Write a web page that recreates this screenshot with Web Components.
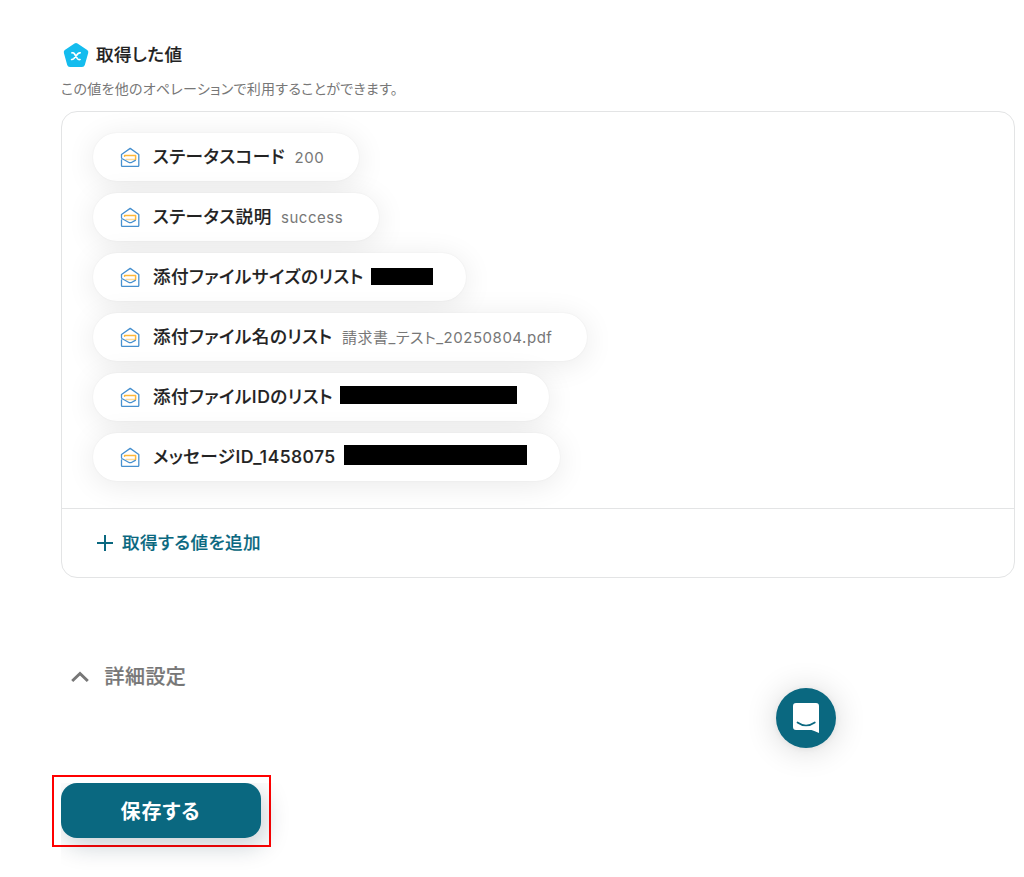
<!DOCTYPE html>
<html lang="ja">
<head>
<meta charset="utf-8">
<title>取得した値</title>
<style>
html,body{margin:0;background:#fff;overflow:hidden}
body{font-family:Inter,"Noto Sans CJK JP",sans-serif;color:#222}
</style>
</head>
<body>
<operation-page></operation-page>
<script>
const define = (name, html) => customElements.define(name, class extends HTMLElement {
  constructor() {
    super();
    const t = document.createElement('template');
    t.innerHTML = html;
    this.attachShadow({mode: 'open'}).append(t.content.cloneNode(true));
  }
});

define('mail-icon', `<style>:host{display:block;width:20px;height:20px}svg{display:block}</style>
<svg width="20" height="20" viewBox="0 0 20 20" fill="none" stroke-width="1.3" stroke-linejoin="round" stroke-linecap="round">
<path stroke="#fdb83a" stroke-width="1.500" d="M4.600 9.300V8.500H15.600V12.500"/><path stroke="#fdb83a" stroke-opacity=".55" d="M15 12.500H6"/>
<path stroke="#4690cf" d="M1.500 13V18.500Q1.500 19.400 2.300 19.400H18Q18.800 19.400 18.800 18.500V7.500L10.200 1.400 1.500 7.500V10.500Q1.500 11.300 2.300 11.800L8.500 15.200Q10.200 16.100 11.900 15.200L15.300 13.400"/></svg>`);

define('value-pill', `<style>
:host{display:flex;align-items:center;box-sizing:border-box;height:48px;width:var(--w);padding-left:27px;border-radius:24px;background:#fff;box-shadow:0 0 2px rgba(0,0,0,.06),0 4px 30px rgba(0,0,0,.09)}
mail-icon{margin:0 13px 0 0;flex:none}
.label{font-weight:500;-webkit-text-stroke:.15px currentColor;font-size:17.6px;line-height:24px;white-space:nowrap;letter-spacing:.46px;font-feature-settings:"palt";width:var(--lw);flex:none}
.value{font-size:15px;line-height:20px;white-space:nowrap;letter-spacing:.53px;color:#777;font-feature-settings:"palt";margin-top:2px}
</style><mail-icon></mail-icon><span class="label"><slot></slot></span><span class="value"><slot name="value"></slot></span>`);

define('redacted-value', `<style>:host{display:block;width:var(--rw);height:var(--rh);background:#000;margin-top:var(--mt,0)}</style>`);

define('section-heading', `<style>
:host{display:block}
.row{display:flex;align-items:center;height:28px;gap:6px;padding-left:2px}
svg{display:block}
h2{margin:0;font-size:17.6px;line-height:28px;font-weight:500;-webkit-text-stroke:.15px currentColor;letter-spacing:.4px;font-feature-settings:"palt"}
p{margin:10px 0 0;height:18px;font-size:14px;line-height:20px;color:#777;letter-spacing:.29px;font-feature-settings:"palt";white-space:nowrap}
</style><div class="row"><svg width="27" height="27" viewBox="0 0 27 27"><path fill="#14bcee" d="M11.500 1.600Q13 .600 14.500 1.600L24.200 8Q25.700 9.100 25.200 10.900L21.800 22.900Q21.200 25 19 25H7Q4.800 25 4.200 22.900L.900 10.900Q.400 9.100 1.800 8Z"/><path fill="none" stroke="#fff" stroke-width="1.700" stroke-linecap="round" d="M9 10.800Q10.600 10.500 11.400 11.800L14.400 16.600Q15.200 17.800 17 17.500M17.200 10.800Q16 10.700 15 11.700L10.900 16.500Q10 17.500 8.600 17.500"/></svg><h2><slot></slot></h2></div><p><slot name="note"></slot></p>`);

define('value-panel', `<style>
:host{display:block;box-sizing:border-box;width:954px;height:467px;border:1px solid #e3e4e5;border-radius:16px;overflow:hidden}
.list{box-sizing:border-box;height:397px;padding:21px 31px;display:flex;flex-direction:column;align-items:flex-start;gap:12px;border-bottom:1px solid #e3e4e5;overflow:hidden}
.foot{height:68px;display:flex;align-items:center}
</style><div class="list"><slot></slot></div><div class="foot"><slot name="footer"></slot></div>`);

define('add-button', `<style>:host{display:flex;align-items:center;color:#0a6880;padding-left:35px;gap:9px;font-size:17.6px;font-weight:500;-webkit-text-stroke:.15px currentColor;line-height:24px;letter-spacing:.4px;font-feature-settings:"palt"}svg{display:block}</style>
<svg width="16" height="16" viewBox="0 0 16 16" stroke="currentColor" stroke-width="2"><path d="M8 0V16M0 8H16"/></svg><span><slot></slot></span>`);

define('detail-toggle', `<style>:host{display:flex;align-items:center;gap:16px;color:#777;font-size:20px;font-weight:500;-webkit-text-stroke:.2px currentColor;line-height:30px;letter-spacing:.4px}svg{display:block}</style>
<svg width="18" height="12" viewBox="0 0 18 12" fill="none" stroke="currentColor" stroke-width="3"><path d="M1.200 10 9 2.500 16.800 10"/></svg><span><slot></slot></span>`);

define('save-button', `<style>
:host{display:block;box-sizing:border-box;width:219px;height:72px;border:2px solid #f00;padding:6px 7px}
.clip{width:200px;height:55px;clip-path:inset(0 -40px -40px 0)}
button{all:unset;box-sizing:border-box;width:200px;height:55px;border-radius:16px;background:#0a6880;color:#fff;display:flex;align-items:center;justify-content:center;font-size:20px;font-weight:700;letter-spacing:.9px;padding:0 1px 1px 0;font-feature-settings:"palt";box-shadow:4px 8px 24px rgba(9,40,60,.22)}
</style><div class="clip"><button><slot></slot></button></div>`);

define('chat-launcher', `<style>:host{position:absolute;left:776px;top:688px;width:60px;height:60px;border-radius:50%;background:#0a6880;box-shadow:0 1px 6px rgba(0,0,0,.06),0 2px 32px rgba(0,0,0,.16);display:grid;place-items:center}svg{display:block}</style>
<svg width="28" height="32" viewBox="0 0 28 32"><path fill="#fff" d="M4 1H24Q27 1 27 4V31Q22.500 29 19.500 28H4Q1 28 1 25V4Q1 1 4 1Z"/><path d="M5.500 20.500Q14 26.500 22.800 20.500" fill="none" stroke="#0a6880" stroke-width="1.700" stroke-linecap="round"/></svg>`);

define('operation-page', `<style>
:host{display:flex;flex-direction:column;align-items:flex-start;box-sizing:border-box;width:1024px;height:877px;padding:41px 0 0 61px;overflow:hidden;position:relative;color:#222}
value-panel{margin-top:14px}
detail-toggle{margin:84px 0 0 9.6px}
save-button{margin:83px 0 0 -9px}
</style>
<section-heading>取得した値<span slot="note">この値を他のオペレーションで利用することができます。</span></section-heading>
<value-panel>
<value-pill style="--w:266px;--lw:141.500px">ステータスコード<span slot="value">200</span></value-pill>
<value-pill style="--w:286px;--lw:128px">ステータス説明<span slot="value">success</span></value-pill>
<value-pill style="--w:373px;--lw:218px">添付ファイルサイズのリスト<redacted-value slot="value" style="--rw:62px;--rh:17px;--mt:-3px"></redacted-value></value-pill>
<value-pill style="--w:494px;--lw:189px">添付ファイル名のリスト<span slot="value">請求書_テスト_20250804.pdf</span></value-pill>
<value-pill style="--w:456px;--lw:187px">添付ファイルIDのリスト<redacted-value slot="value" style="--rw:177px;--rh:18px;--mt:-6px"></redacted-value></value-pill>
<value-pill style="--w:467px;--lw:191px">メッセージID_1458075<redacted-value slot="value" style="--rw:183px;--rh:20px;--mt:-6px"></redacted-value></value-pill>
<add-button slot="footer">取得する値を追加</add-button>
</value-panel>
<detail-toggle>詳細設定</detail-toggle>
<save-button>保存する</save-button>
<chat-launcher></chat-launcher>`);
</script>
</body>
</html>
